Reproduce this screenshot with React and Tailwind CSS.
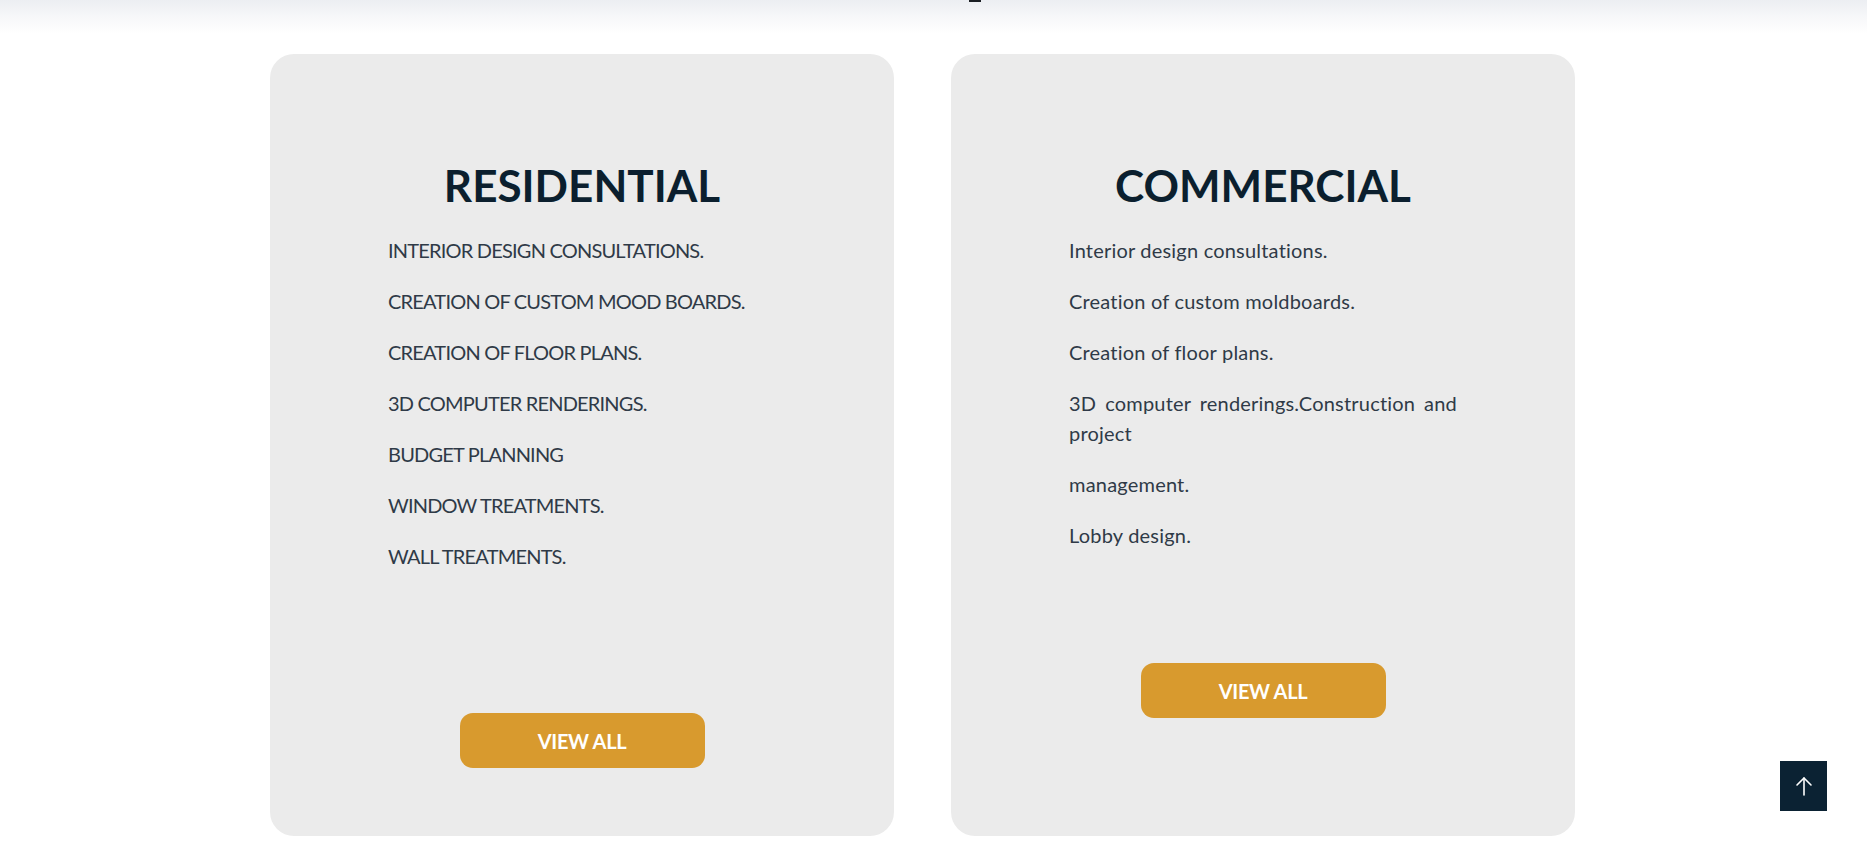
import React from "react";

const residential = [
  "INTERIOR DESIGN CONSULTATIONS.",
  "CREATION OF CUSTOM MOOD BOARDS.",
  "CREATION OF FLOOR PLANS.",
  "3D COMPUTER RENDERINGS.",
  "BUDGET PLANNING",
  "WINDOW TREATMENTS.",
  "WALL TREATMENTS.",
];

const commercial = [
  "Interior design consultations.",
  "Creation of custom moldboards.",
  "Creation of floor plans.",
  "3D computer renderings.Construction and project",
  "management.",
  "Lobby design.",
];

function Card({ title, items, gap, track }) {
  return (
    <div className="w-[624px] h-[782px] rounded-[24px] bg-[#ebebeb] flex flex-col items-center pt-[102px]">
      <h2 className="text-[44px] leading-[58px] font-bold text-[#0b1f2e]">{title}</h2>
      <ul className="w-full px-[118px] mt-[21px]">
        {items.map((t) => (
          <li key={t} className={`${track} text-[20px] leading-[30px] mb-[21px] text-[#2f3a47] text-justify`}>
            {t}
          </li>
        ))}
      </ul>
      <button className={`${gap} w-[245px] h-[55px] rounded-[13px] bg-[#d89a2e] text-white text-[20px] font-bold tracking-[-0.3px]`}>
        VIEW ALL
      </button>
    </div>
  );
}

export default function App() {
  return (
    <div className="relative w-[1867px] h-[841px] bg-white overflow-hidden" style={{ fontFamily: "'Source Sans Pro', Lato, 'Noto Sans', sans-serif" }}>
      <div className="h-[54px] bg-[linear-gradient(to_bottom,#eceef2_0px,#f6f7f9_16px,#ffffff_34px)] relative">
        <div className="absolute left-[969px] top-0 w-[12px] h-[2px] bg-[#1b1f24]" />
      </div>
      <div className="flex gap-[57px] pl-[270px]">
        <Card title="RESIDENTIAL" items={residential} gap="mt-[121px]" track="tracking-[-0.8px]" />
        <Card title="COMMERCIAL" items={commercial} gap="mt-[92px]" track="tracking-[0.2px]" />
      </div>
      <button className="absolute left-[1780px] top-[761px] w-[47px] h-[50px] bg-[#0b2233] flex items-center justify-center">
        <svg width="20" height="22" viewBox="0 0 20 22" fill="none" stroke="white" strokeWidth="1.6" strokeLinecap="round" strokeLinejoin="round">
          <path d="M10 20V3" />
          <path d="M3 10l7-7 7 7" />
        </svg>
      </button>
    </div>
  );
}
